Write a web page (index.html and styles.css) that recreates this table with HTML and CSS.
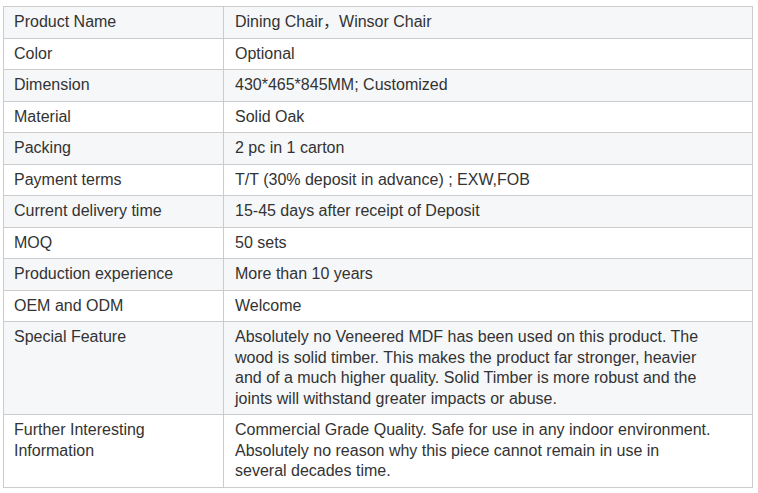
FILE: index.html
```html
<!DOCTYPE html>
<html>
<head>
<meta charset="utf-8">
<link rel="stylesheet" href="styles.css">
</head>
<body>
<table class="spec">
  <tr class="odd"><td class="k">Product Name</td><td class="v">Dining Chair，Winsor Chair</td></tr>
  <tr><td class="k">Color</td><td class="v">Optional</td></tr>
  <tr class="odd"><td class="k">Dimension</td><td class="v">430*465*845MM; Customized</td></tr>
  <tr><td class="k">Material</td><td class="v">Solid Oak</td></tr>
  <tr class="odd"><td class="k">Packing</td><td class="v">2 pc in 1 carton</td></tr>
  <tr><td class="k">Payment terms</td><td class="v">T/T (30% deposit in advance) ; EXW,FOB</td></tr>
  <tr class="odd"><td class="k">Current delivery time</td><td class="v">15-45 days after receipt of Deposit</td></tr>
  <tr><td class="k">MOQ</td><td class="v">50 sets</td></tr>
  <tr class="odd"><td class="k">Production experience</td><td class="v">More than 10 years</td></tr>
  <tr><td class="k">OEM and ODM</td><td class="v">Welcome</td></tr>
  <tr class="odd"><td class="k">Special Feature</td><td class="v">Absolutely no Veneered MDF has been used on this product. The wood is solid timber. This makes the product far stronger, heavier and of a much higher quality. Solid Timber is more robust and the joints will withstand greater impacts or abuse.</td></tr>
  <tr><td class="k">Further Interesting Information</td><td class="v">Commercial Grade Quality. Safe for use in any indoor environment. Absolutely no reason why this piece cannot remain in use in several decades time.</td></tr>
</table>
</body>
</html>
```
FILE: styles.css
```css
html, body {
  margin: 0;
  padding: 0;
  background: #ffffff;
}
.spec {
  margin: 6px 0 0 3px;
  width: 750px;
  border-collapse: collapse;
  font-family: "Liberation Sans", "Noto Sans CJK SC", Arial, sans-serif;
  font-size: 16px;
  line-height: 20.5px;
  color: #333333;
  table-layout: fixed;
}
.spec td {
  border: 1px solid #cccccc;
  padding: 5px 40px 5px 11px;
  vertical-align: top;
  text-align: left;
}
.spec td.k {
  width: 199px;
  padding-left: 10px;
  padding-right: 10px;
}
.spec tr.odd td {
  background: #f6f7f9;
}
```
